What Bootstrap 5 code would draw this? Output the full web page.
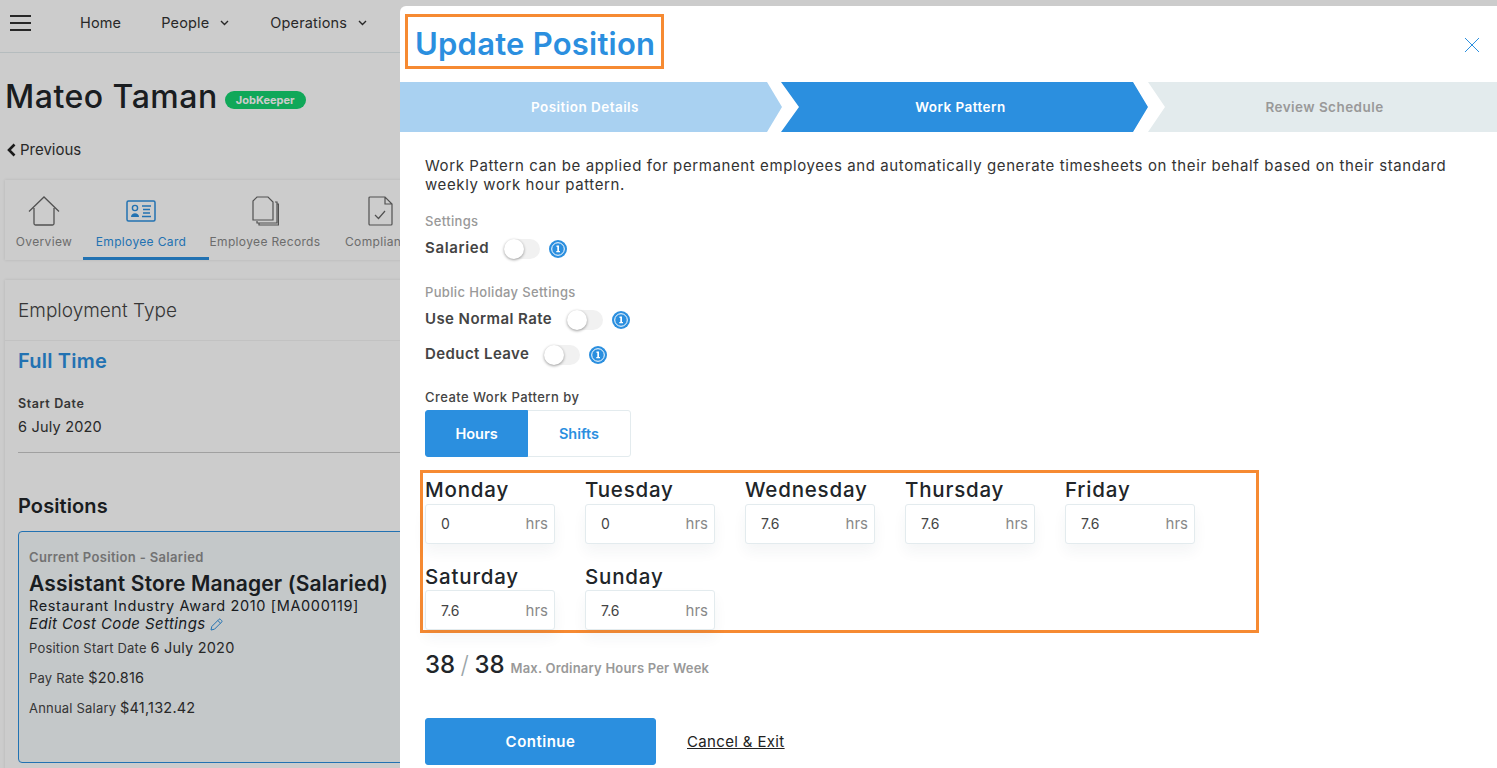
<!DOCTYPE html>
<html lang="en">
<head>
    <meta charset="UTF-8">
    <meta name="viewport" content="width=device-width, initial-scale=1.0">
    <link href="https://cdn.jsdelivr.net/npm/bootstrap@5.3.0/dist/css/bootstrap.min.css" rel="stylesheet">
    <title>Update Position</title>
    <style>
        html, body { height: 768px; overflow: hidden; }
        body { font-family: "Inter", "Open Sans", sans-serif; color: #212529; background: #fff; font-size: 14px; }
        .page-wrap { width: 1100px; height: 768px; overflow: hidden; }
        .backdrop-shade { position: fixed; inset: 0; background: rgba(0, 0, 0, .2); }

        .top-bar { height: 53px; border-bottom: 1px solid #e3ebee; padding: 0 0 6px 10px; }
        .top-bar a { color: #333; text-decoration: none; font-size: 14.5px; letter-spacing: .15px; }
        .top-item-home { margin-left: 49px; }
        .top-item-people { margin-left: 40px; }
        .top-item-ops { margin-left: 41px; }
        .nav-caret { margin-left: 11px; }
        .name-row { margin: 24px 0 0 5px; }
        .person-name { font-size: 32px; font-weight: 500; line-height: 40px; letter-spacing: .5px; }
        .job-tag { background: #14d270; color: #fff; font-size: 11px; font-weight: 700; border-radius: 9px; height: 18px; width: 81px; line-height: 18px; text-align: center; margin-left: 7px; margin-top: 6px; }
        .prev-link { font-size: 15px; margin: 23px 0 0 6px; line-height: 20px; color: #333; }

        .tab-box { margin: 20px 0 0 5px; height: 80px; background: #fff; box-shadow: 0 0 3px rgba(0, 0, 0, .12); }
        .tab-one { text-align: center; font-size: 12px; letter-spacing: .35px; color: #888; height: 80px; padding-top: 16px; }
        .tab-one svg { display: block; margin: 0 auto 7px; }
        .tab-one.on { color: #2b8fdf; border-bottom: 3px solid #2b8fdf; padding-right: 10px; }
        .tab-overview { width: 78px; }
        .tab-card { width: 126px; }
        .tab-records { width: 112px; }
        .tab-comply { padding-left: 24px; }

        .type-box { margin: 20px 0 0 5px; height: 500px; box-shadow: 0 0 3px rgba(0, 0, 0, .12); background: #fff; }
        .type-head { height: 61px; line-height: 60px; padding: 1px 0 0 13px; font-size: 19px; font-weight: 300; color: #444; border-bottom: 1px solid #f3f3f3; }
        .type-body { padding-left: 13px; }
        .type-name { font-size: 20px; font-weight: 600; color: #2b8fdf; line-height: 26px; margin-top: 7px; letter-spacing: .2px; }
        .start-lbl { font-size: 12.5px; font-weight: 600; color: #444; margin-top: 22px; line-height: 16px; letter-spacing: .6px; }
        .start-val { font-size: 14.5px; color: #333; margin-top: 5px; line-height: 20px; padding-bottom: 15px; border-bottom: 1px solid #c8c8c8; letter-spacing: .2px; }
        .pos-title { font-size: 20px; font-weight: 600; line-height: 26px; margin-top: 40px; letter-spacing: .1px; }
        .pos-card { margin-top: 12px; height: 232px; background: #f5fafc; border: 1px solid #2b8fdf; border-radius: 4px; padding: 16px 10px; }
        .pos-kicker { font-size: 13px; font-weight: 600; color: #8f8f8f; line-height: 18px; letter-spacing: .33px; }
        .pos-role { font-size: 21px; font-weight: 600; line-height: 26px; margin-top: 5px; white-space: nowrap; letter-spacing: .15px; }
        .pos-award { font-size: 14.5px; line-height: 18px; white-space: nowrap; letter-spacing: .63px; }
        .pos-edit { font-size: 15px; font-style: italic; line-height: 18px; letter-spacing: .4px; }
        .pos-line { font-size: 13px; color: #444; line-height: 20px; margin-top: 10px; letter-spacing: .2px; }
        .pos-line b { font-size: 14.5px; font-weight: 400; color: #333; letter-spacing: .2px; }
        .pos-line.first { margin-top: 5px; }

        .side-panel { position: fixed; left: 400px; top: 6px; right: 0; bottom: 0; background: #fff; border-top-left-radius: 6px; }
        .panel-head { height: 76px; }
        .title-frame { border: 3px solid #f68a32; margin: 8px 0 0 5px; height: 55px; width: 259px; padding: 2px 0 0 7px; }
        .panel-title { font-size: 31px; font-weight: 600; color: #2b8fdf; line-height: 49px; margin: 0; white-space: nowrap; letter-spacing: .23px; }
        .close-x { margin: 31px 17px 0 0; }

        .step-one, .step-two, .step-three { height: 50px; line-height: 50px; text-align: center; font-size: 13.5px; font-weight: 600; letter-spacing: .45px; }
        .step-one { width: 382px; background: #a9d1f1; color: #fff; padding-right: 12px; clip-path: polygon(0 0, 367px 0, 100% 50%, 367px 100%, 0 100%); }
        .step-two { width: 367px; margin-left: -1px; background: #2b8fdf; color: #fff; padding-right: 8px; clip-path: polygon(0 0, 352px 0, 100% 50%, 352px 100%, 0 100%, 18px 50%); }
        .step-three { flex: 1; background: #e3ebed; color: #999; padding-left: 4px; clip-path: polygon(0 0, 100% 0, 100% 100%, 0 100%, 17px 50%); }

        .panel-body-wrap { padding: 25px 25px 0; }
        .intro-text { font-size: 15px; line-height: 18.5px; color: #333; margin: 0; letter-spacing: .6px; }
        .grp-label { font-size: 13px; font-weight: 500; color: #999; line-height: 16px; letter-spacing: .35px; }
        .grp-settings { margin-top: 19px; }
        .grp-holiday { margin-top: 25px; }
        .set-row-first { margin-top: 8px; }
        .set-row-holiday { margin-top: 8px; }
        .set-row-next { margin-top: 13px; }
        .set-name { font-size: 15px; font-weight: 600; color: #444; line-height: 20px; letter-spacing: .42px; }
        .set-row-first .set-name { letter-spacing: .65px; }
        .form-check-input.sw-plain { width: 36px; height: 20px; margin: 2px 0 0 15px; background: #f1f1f1; border: 0; border-radius: 10px; position: relative; float: none; }
        .form-check-input.sw-plain::after { content: ""; position: absolute; left: 0; top: 0; width: 20px; height: 20px; border-radius: 50%; background: #fff; box-shadow: 0 1px 3px rgba(0, 0, 0, .4); }
        .sw-row { padding-left: 0; margin: 0; min-height: 0; }
        .info-mark { margin: 2px 0 0 9px; }

        .pick-by { font-size: 13px; font-weight: 500; color: #444; line-height: 16px; margin-top: 24px; letter-spacing: .45px; }
        .pick-group { margin-top: 5px; width: 206px; }
        .pick-group .btn { flex: 0 0 104px; height: 47px; font-size: 14.5px; font-weight: 600; border-color: #e3ebee; border-radius: 3px; color: #2b8fdf; background: #fff; }
        .pick-group .btn.active { flex: 0 0 103px; background: #2b8fdf; border-color: #2b8fdf; color: #fff; }

        .days-frame { border: 3px solid #f68a32; width: 839px; height: 163px; margin: 13px 0 0 -5px; padding: 2px; display: grid; grid-template-columns: repeat(5, 160px); grid-auto-rows: 87px; }
        .day-name { font-size: 20.5px; font-weight: 500; line-height: 27px; padding-top: 1px; color: #212529; letter-spacing: .8px; }
        .day-one { height: 87px; }
        .hrs-box { width: 130px; height: 40px; border: 1px solid #e3ebee; border-radius: 3px; background: #fff; box-shadow: 0 8px 14px rgba(30, 60, 80, .05); margin-top: 1px; padding-bottom: 1px; }
        .day-one:nth-child(n+6) .hrs-box { margin-top: 0; padding-bottom: 0; }
        .hrs-box input { border: 0; outline: 0; width: 90px; padding: 0 0 0 15px; font-size: 14px; color: #444; font-family: inherit; background: transparent; }
        .hrs-unit { font-size: 15px; color: #888; padding: 2px 6px 0 0; margin-left: auto; }

        .hours-total { margin-top: 16px; line-height: 32px; }
        .hours-num { font-size: 24px; font-weight: 500; }
        .hours-sep { font-size: 24px; font-weight: 300; color: #9aa5a8; margin: 0 1.5px; }
        .hours-note { font-size: 13px; font-weight: 600; color: #999; margin-left: 2px; letter-spacing: .2px; }

        .go-btn { width: 231px; height: 47px; padding-top: 8px; background: #2b8fdf; border-color: #2b8fdf; color: #fff; font-size: 15px; font-weight: 600; border-radius: 3px; letter-spacing: .5px; }
        .foot-row { margin-top: 34px; }
        .cancel-link { color: #222; font-size: 15px; margin: 2px 0 0 31px; letter-spacing: .35px; }
    </style>
</head>
<body>
    <div class="page-wrap">
        <div class="top-bar d-flex align-items-center">
            <svg width="21" height="16" viewBox="0 0 21 16"><path d="M0 1h21M0 8h21M0 15h21" stroke="#333" stroke-width="2" fill="none"/></svg>
            <a href="#" class="top-item-home">Home</a>
            <a href="#" class="top-item-people">People</a>
            <svg class="nav-caret" width="9" height="6" viewBox="0 0 9 6"><path d="M1 1l3.500 3.500L8 1" stroke="#333" stroke-width="1.400" fill="none"/></svg>
            <a href="#" class="top-item-ops">Operations</a>
            <svg class="nav-caret" width="9" height="6" viewBox="0 0 9 6"><path d="M1 1l3.500 3.500L8 1" stroke="#333" stroke-width="1.400" fill="none"/></svg>
        </div>

        <div class="d-flex align-items-center name-row">
            <div class="person-name">Mateo Taman</div>
            <div class="job-tag">JobKeeper</div>
        </div>
        <div class="prev-link d-flex align-items-center gap-1">
            <svg width="10" height="14" viewBox="0 0 10 14"><path d="M8.500 1.500L3 7l5.500 5.500" stroke="#222" stroke-width="2.600" fill="none"/></svg>
            Previous
        </div>

        <div class="tab-box d-flex">
            <div class="tab-one tab-overview">
                <svg width="32" height="30" viewBox="0 0 32 30"><path d="M1 15.500L16 1l15 14.500M6 12v15.500a1.500 1.500 0 0 0 1.500 1.500h17a1.500 1.500 0 0 0 1.500-1.500V12" stroke="#666" stroke-width="1.300" fill="none"/></svg>
                Overview
            </div>
            <div class="tab-one tab-card on">
                <svg width="30" height="30" viewBox="0 0 30 30"><rect x="1" y="5" width="28" height="20" rx="1.500" stroke="#2b8fdf" stroke-width="1.500" fill="none"/><circle cx="9" cy="12" r="2.600" stroke="#2b8fdf" stroke-width="1.400" fill="none"/><path d="M5 21c0-5 8-5 8 0z" fill="#2b8fdf"/><path d="M16 10h9M17 13.500h7M17 17h7M16 20.500h9" stroke="#2b8fdf" stroke-width="1.500"/></svg>
                Employee Card
            </div>
            <div class="tab-one tab-records text-nowrap">
                <svg width="28" height="30" viewBox="0 0 28 30"><path d="M6 1h11l5 5v18H2V5z" stroke="#666" stroke-width="1.200" fill="none"/><path d="M24 6h2v21H6v-2M26 8h1.500v21H8v-2" stroke="#666" stroke-width="1.200" fill="none"/></svg>
                Employee Records
            </div>
            <div class="tab-one tab-comply text-nowrap">
                <svg width="26" height="30" viewBox="0 0 26 30"><path d="M3 1h15l7 7v20a1 1 0 0 1-1 1H3a1 1 0 0 1-1-1V2a1 1 0 0 1 1-1zM18 1v7h7" stroke="#666" stroke-width="1.200" fill="none"/><path d="M8 19l3.500 3.500L18 15" stroke="#666" stroke-width="1.200" fill="none"/></svg>
                Compliance
            </div>
        </div>

        <div class="type-box">
            <div class="type-head">Employment Type</div>
            <div class="type-body">
                <div class="type-name">Full Time</div>
                <div class="start-lbl">Start Date</div>
                <div class="start-val">6 July 2020</div>
                <div class="pos-title">Positions</div>
                <div class="pos-card">
                    <div class="pos-kicker">Current Position - Salaried</div>
                    <div class="pos-role">Assistant Store Manager (Salaried)</div>
                    <div class="pos-award">Restaurant Industry Award 2010 [MA000119]</div>
                    <div class="pos-edit">Edit Cost Code Settings
                        <svg width="13" height="13" viewBox="0 0 13 13"><path d="M1 12l.8-3.500L9 1.300a1 1 0 0 1 1.400 0l1.300 1.300a1 1 0 0 1 0 1.400L4.500 11.200zM7.800 2.500l2.700 2.700" stroke="#2b8fdf" stroke-width="1" fill="none"/></svg>
                    </div>
                    <div class="pos-line first">Position Start Date <b>6 July 2020</b></div>
                    <div class="pos-line">Pay Rate <b>$20.816</b></div>
                    <div class="pos-line">Annual Salary <b>$41,132.42</b></div>
                </div>
            </div>
        </div>
    </div>

    <div class="backdrop-shade"></div>

    <div class="side-panel">
        <div class="panel-head d-flex justify-content-between align-items-start">
            <div class="title-frame"><h1 class="panel-title">Update Position</h1></div>
            <svg class="close-x" width="16" height="16" viewBox="0 0 16 16"><path d="M1 1l14 14M15 1L1 15" stroke="#2b8fdf" stroke-width="1"/></svg>
        </div>

        <div class="d-flex">
            <div class="step-one">Position Details</div>
            <div class="step-two">Work Pattern</div>
            <div class="step-three">Review Schedule</div>
        </div>

        <div class="panel-body-wrap">
            <p class="intro-text">Work Pattern can be applied for permanent employees and automatically generate timesheets on their behalf based on their standard weekly work hour pattern.</p>

            <div class="grp-label grp-settings">Settings</div>
            <div class="d-flex align-items-center set-row-first">
                <span class="set-name">Salaried</span>
                <div class="form-check form-switch sw-row"><input class="form-check-input sw-plain" type="checkbox"></div>
                <svg class="info-mark" width="18" height="18" viewBox="0 0 18 18"><circle cx="9" cy="9" r="9" fill="#2b8fdf"/><circle cx="9" cy="9" r="6.300" fill="none" stroke="#fff" stroke-width="1"/><path d="M7.500 5.500h2.500v5.500h1v1.300H7.300V11h1V7H7.500z" fill="#fff"/></svg>
            </div>

            <div class="grp-label grp-holiday">Public Holiday Settings</div>
            <div class="d-flex align-items-center set-row-holiday">
                <span class="set-name">Use Normal Rate</span>
                <div class="form-check form-switch sw-row"><input class="form-check-input sw-plain" type="checkbox"></div>
                <svg class="info-mark" width="18" height="18" viewBox="0 0 18 18"><circle cx="9" cy="9" r="9" fill="#2b8fdf"/><circle cx="9" cy="9" r="6.300" fill="none" stroke="#fff" stroke-width="1"/><path d="M7.500 5.500h2.500v5.500h1v1.300H7.300V11h1V7H7.500z" fill="#fff"/></svg>
            </div>
            <div class="d-flex align-items-center set-row-next">
                <span class="set-name">Deduct Leave</span>
                <div class="form-check form-switch sw-row"><input class="form-check-input sw-plain" type="checkbox"></div>
                <svg class="info-mark" width="18" height="18" viewBox="0 0 18 18"><circle cx="9" cy="9" r="9" fill="#2b8fdf"/><circle cx="9" cy="9" r="6.300" fill="none" stroke="#fff" stroke-width="1"/><path d="M7.500 5.500h2.500v5.500h1v1.300H7.300V11h1V7H7.500z" fill="#fff"/></svg>
            </div>

            <div class="pick-by">Create Work Pattern by</div>
            <div class="btn-group pick-group d-flex" role="group">
                <button type="button" class="btn active">Hours</button>
                <button type="button" class="btn">Shifts</button>
            </div>

            <div class="days-frame" id="days"></div>

            <div class="hours-total">
                <span class="hours-num">38</span> <span class="hours-sep">/</span> <span class="hours-num">38</span>
                <span class="hours-note">Max. Ordinary Hours Per Week</span>
            </div>

            <div class="d-flex align-items-center foot-row">
                <button type="button" class="btn go-btn">Continue</button>
                <a href="#" class="cancel-link">Cancel &amp; Exit</a>
            </div>
        </div>
    </div>

    <script>
        const dayHours = [['Monday', '0'], ['Tuesday', '0'], ['Wednesday', '7.6'], ['Thursday', '7.6'], ['Friday', '7.6'], ['Saturday', '7.6'], ['Sunday', '7.6']];
        const daysBox = document.getElementById('days');
        dayHours.forEach(d => {
            daysBox.innerHTML += `
                <div class="day-one">
                    <div class="day-name">${d[0]}</div>
                    <div class="hrs-box d-flex align-items-center">
                        <input type="text" value="${d[1]}">
                        <span class="hrs-unit">hrs</span>
                    </div>
                </div>`;
        });
    </script>
</body>
</html>
